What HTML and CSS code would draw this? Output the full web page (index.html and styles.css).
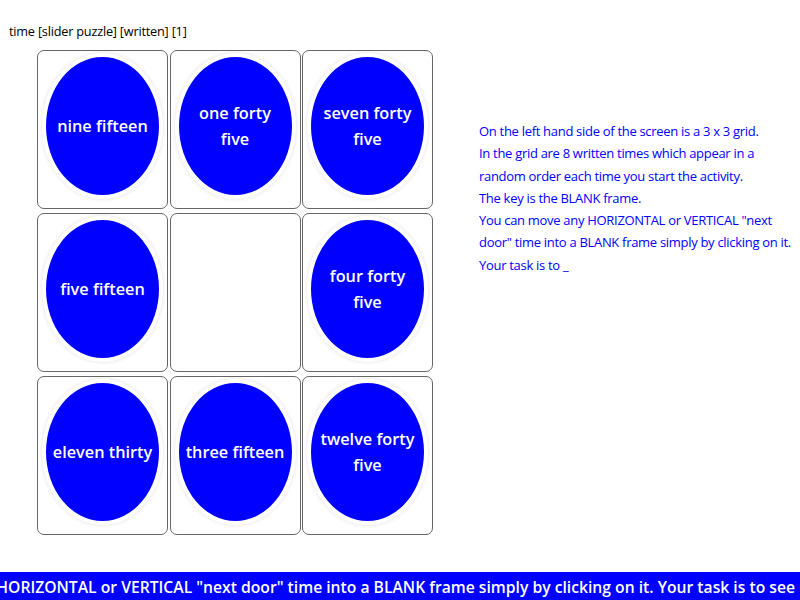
FILE: index.html
```html
<!DOCTYPE html>
<html>
<head>
<meta charset="utf-8">
<link rel="stylesheet" href="styles.css">
</head>
<body>
<div class="title">time [slider puzzle] [written] [1]</div>
<div class="main">
  <div class="grid">
    <div class="cell"><div class="disc"><span>nine fifteen</span></div></div>
    <div class="cell"><div class="disc"><span>one forty<br>five</span></div></div>
    <div class="cell"><div class="disc"><span>seven forty<br>five</span></div></div>
    <div class="cell"><div class="disc"><span>five fifteen</span></div></div>
    <div class="cell"></div>
    <div class="cell"><div class="disc"><span>four forty<br>five</span></div></div>
    <div class="cell"><div class="disc"><span>eleven thirty</span></div></div>
    <div class="cell"><div class="disc"><span>three fifteen</span></div></div>
    <div class="cell"><div class="disc"><span>twelve forty<br>five</span></div></div>
  </div>
  <div class="info">
    On the left hand side of the screen is a 3 x 3 grid.<br>
    In the grid are 8 written times which appear in a<br>
    random order each time you start the activity.<br>
    The key is the BLANK frame.<br>
    You can move any HORIZONTAL or VERTICAL "next<br>
    door" time into a BLANK frame simply by clicking on it.<br>
    Your task is to _
  </div>
</div>
<div class="ticker"><div class="ticker-text">You can move any HORIZONTAL or VERTICAL "next door" time into a BLANK frame simply by clicking on it. Your task is to see</div></div>
</body>
</html>
```
FILE: styles.css
```css
html, body {
  margin: 0;
  padding: 0;
  width: 800px;
  height: 600px;
  overflow: hidden;
  background: #fff;
  font-family: "Open Sans", "DejaVu Sans", sans-serif;
}
body {
  display: flex;
  flex-direction: column;
}
.title {
  font-size: 12.7px;
  color: #000;
  padding: 24px 0 0 9px;
  height: 50px;
  box-sizing: border-box;
  line-height: 15px;
  letter-spacing: -0.2px;
  flex: none;
}
.main {
  display: flex;
  height: 522px;
  flex: none;
}
.grid {
  margin-left: 37px;
  display: grid;
  grid-template-columns: repeat(3, 131px);
  grid-template-rows: repeat(3, 159px);
  column-gap: 1.5px;
  row-gap: 4px;
  align-content: start;
}
.cell {
  box-sizing: border-box;
  border: 1px solid #666;
  border-radius: 7px;
  display: flex;
  justify-content: center;
  align-items: flex-start;
  padding-top: 2px;
}
.disc {
  box-sizing: border-box;
  width: 121px;
  height: 146px;
  border-radius: 50%;
  background: #0000ff;
  border: 4px solid #fff;
  box-shadow: 0 0 4px rgba(0,0,0,0.12);
  display: flex;
  align-items: center;
  justify-content: center;
  text-align: center;
  color: #fff;
  font-size: 16.3px;
  font-weight: 600;
  line-height: 26px;
}
.info {
  margin-left: 46px;
  padding-top: 70px;
  color: #0000ff;
  font-size: 13px;
  line-height: 22.3px;
  white-space: nowrap;
  letter-spacing: -0.3px;
}
.ticker {
  height: 28px;
  flex: none;
  background: #0000ff;
  overflow: hidden;
  white-space: nowrap;
  display: flex;
  justify-content: flex-end;
  padding-right: 5px;
}
.ticker-text {
  flex: none;
  color: #fff;
  font-size: 15.7px;
  font-weight: 600;
  line-height: 30px;
}
```
